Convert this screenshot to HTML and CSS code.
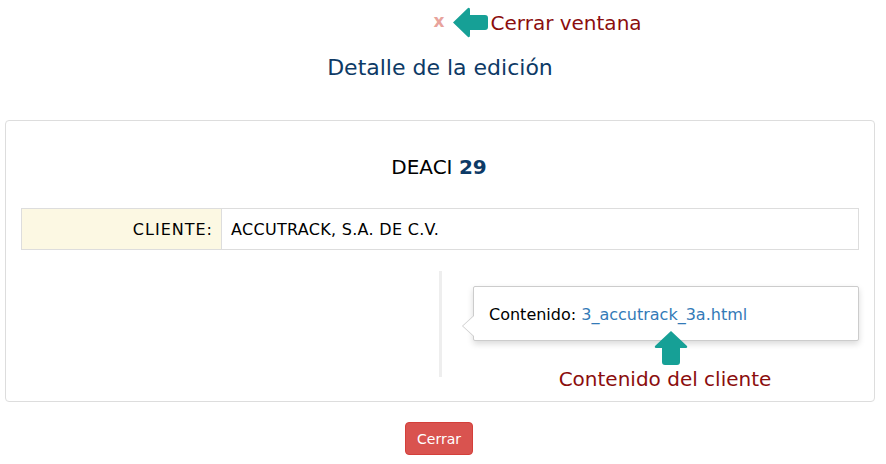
FILE: index.html
```html
<!DOCTYPE html>
<html lang="es">
<head>
<meta charset="utf-8">
<title>Detalle de la edición</title>
<link rel="stylesheet" href="styles.css">
</head>
<body>
<div class="modal">
  <div class="close-row">
    <span class="close-wrap">
      <span class="close-x">x</span>
      <span class="note note-close">
        <svg class="arrow-left" width="37" height="31" viewBox="0 0 37 31"><path d="M1 15.5 L16 1 Q18 0 18 3 L18 8 L33 8 Q36 8 36 11 L36 20 Q36 23 33 23 L18 23 L18 28 Q18 31 16 30 Z" fill="#16a096"/></svg>
        <span class="note-text">Cerrar ventana</span>
      </span>
    </span>
  </div>
  <h1 class="title">Detalle de la edición</h1>
  <div class="panel">
    <h2 class="code">DEACI <b>29</b></h2>
    <table class="info">
      <tr><th>CLIENTE:</th><td>ACCUTRACK, S.A. DE C.V.</td></tr>
    </table>
    <div class="cols">
      <div class="col-left"></div>
      <div class="col-right">
        <div class="popover"><span class="pop-arrow"></span>Contenido: <a href="#" class="link">3_accutrack_3a.html</a></div>
        <div class="note note-content">
          <svg class="arrow-up" width="34" height="34" viewBox="0 0 34 34"><path d="M17 0 L33 15 Q34 17 31 17 L26 17 L26 31 Q26 34 23 34 L11 34 Q8 34 8 31 L8 17 L3 17 Q0 17 1 15 Z" fill="#16a096"/></svg>
          <span class="note-text">Contenido del cliente</span>
        </div>
      </div>
    </div>
  </div>
  <div class="footer">
    <button class="btn-close">Cerrar</button>
  </div>
</div>
</body>
</html>
```
FILE: styles.css
```css
* { box-sizing: border-box; }
body {
  margin: 0;
  font-family: "DejaVu Sans", sans-serif;
  color: #000;
  background: #fff;
}
.modal { width: 886px; }
.close-row {
  height: 44px;
  display: flex;
  justify-content: center;
}
.close-wrap { position: relative; display: inline-block; }
.close-x {
  display: inline-block;
  font-size: 17px;
  font-weight: bold;
  color: #e8a39c;
  line-height: 20px;
  margin-top: 11px;
  margin-left: -8px;
}
.note { position: absolute; display: flex; align-items: center; }
.note-close { left: 10px; top: 7px; gap: 2px; }
.note-text {
  color: #8b0d0d;
  font-size: 20px;
  white-space: nowrap;
}
.title {
  margin: 9px 0 0;
  text-align: center;
  font-weight: normal;
  font-size: 22px;
  line-height: 30px;
  color: #0d3a66;
  padding-right: 6px;
}
.panel {
  margin: 37px 11px 0 5px;
  border: 1px solid #ddd;
  border-radius: 4px;
  padding: 15px;
  height: 282px;
}
.code {
  margin: 18px 0 0;
  text-align: center;
  font-weight: normal;
  font-size: 20px;
  line-height: 26px;
  height: 54px;
  padding-right: 2px;
}
.code b { color: #0d3a66; }
.info {
  width: 100%;
  border-collapse: collapse;
  font-size: 16px;
}
.info th, .info td {
  border: 1px solid #ddd;
  height: 41px;
  padding: 0 9px;
  font-weight: normal;
}
.info th {
  width: 200px;
  background: #fcf8e3;
  text-align: right;
  letter-spacing: 1px;
  padding-right: 8px;
}
.info td { text-align: left; letter-spacing: 0.3px; }
.cols {
  display: flex;
  margin-top: 21px;
  height: 106px;
}
.col-left { width: 418px; }
.col-right {
  position: relative;
  flex: 1;
  border-left: 3px solid #eee;
  padding: 15px 0 0 31px;
}
.popover {
  position: relative;
  height: 55px;
  border: 1px solid #ccc;
  border-radius: 2px;
  background: #fff;
  box-shadow: 0 3px 6px rgba(0,0,0,0.15);
  padding: 0 15px;
  font-size: 16px;
  line-height: 55px;
  white-space: nowrap;
}
.pop-arrow {
  position: absolute;
  left: -12px;
  top: 28px;
  width: 0; height: 0;
  border-top: 11px solid transparent;
  border-bottom: 11px solid transparent;
  border-right: 12px solid #ccc;
}
.pop-arrow::after {
  content: "";
  position: absolute;
  left: 1px;
  top: -10px;
  border-top: 10px solid transparent;
  border-bottom: 10px solid transparent;
  border-right: 11px solid #fff;
}
.link { color: #337ab7; text-decoration: none; }
.note-content {
  left: 103px;
  top: 60px;
  width: 240px;
  flex-direction: column;
  align-items: center;
  gap: 2px;
}
.arrow-up { margin-left: 12px; }
.footer {
  display: flex;
  justify-content: center;
  padding: 20px 8px 0 0;
}
.btn-close {
  width: 68px;
  height: 33px;
  background: #d9534f;
  border: 1px solid #d43f3a;
  border-radius: 4px;
  color: #fff;
  font-family: "DejaVu Sans", sans-serif;
  font-size: 14px;
  padding: 0;
}
```
